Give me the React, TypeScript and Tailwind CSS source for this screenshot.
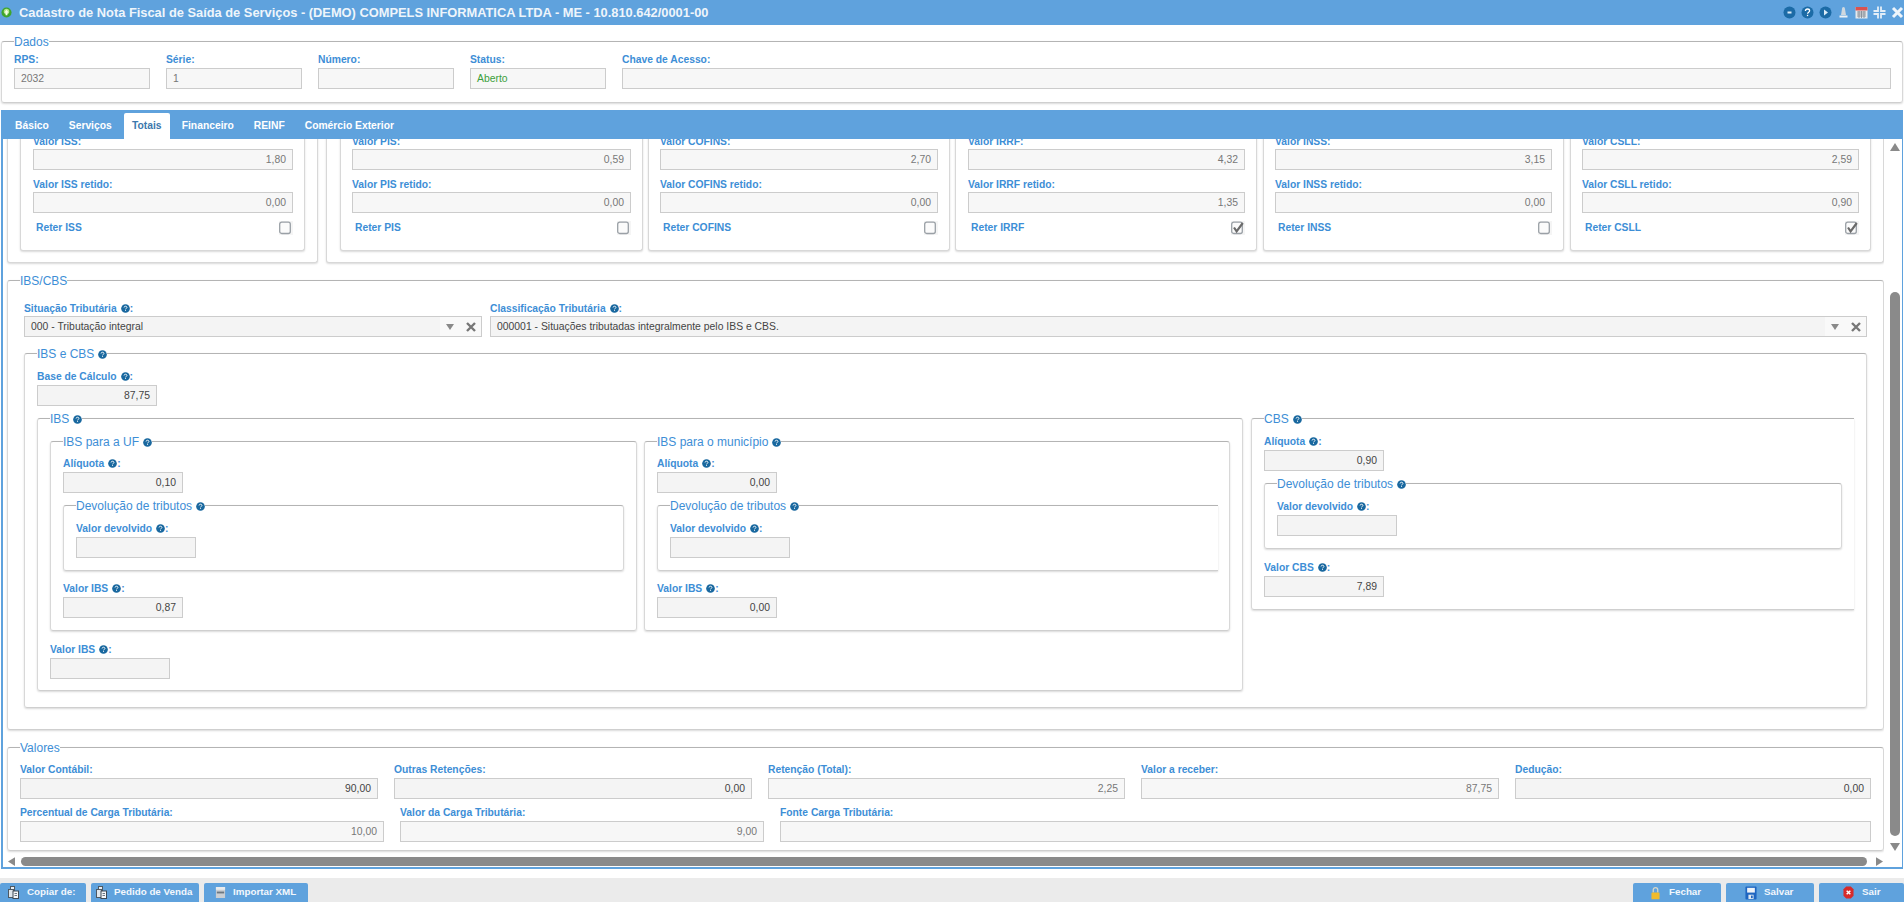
import React from 'react';

const labelBase = "block h-[14px] text-[10.3px] text-[#3d8ed6] font-bold whitespace-nowrap";
const labelCls = `${labelBase} leading-[14px]`;

function Help() {
  return (
    <svg viewBox="0 0 10 10" className="inline-block w-[9px] h-[9px] align-[-1px] ml-[4px]">
      <circle cx="5" cy="5" r="4.8" fill="#19689f" />
      <path d="M3.400 3.900C3.500 2.900 4.200 2.500 5 2.500c.9 0 1.600.5 1.600 1.300 0 1.100-1.500 1-1.500 2.200" fill="none" stroke="#fff" strokeWidth="1" />
      <rect x="4.600" y="6.700" width="1" height="1" fill="#fff" />
    </svg>
  );
}

function Box({ value, cls, soft, green, left }: { value?: string; cls?: string; soft?: boolean; green?: boolean; left?: boolean }) {
  const bg = soft ? "bg-[#f7f7f7]" : "bg-[#f4f4f4]";
  const color = green ? "text-[#3c9f3c]" : soft ? "text-[#777777]" : "text-[#444444]";
  return (
    <div className={`h-[21px] border border-[#cccccc] px-[6px] text-[10.4px] leading-[20px] whitespace-nowrap ${left ? "text-left" : "text-right"} ${bg} ${color} ${cls ?? ""}`}>
      {value}
    </div>
  );
}

function Field({ label, help, value, w, soft, left, green }: { label: string; help?: boolean; value?: string; w: string; soft?: boolean; left?: boolean; green?: boolean }) {
  return (
    <div className={w}>
      <label className={`${labelBase} leading-[12px]`}>
        {label}
        {help && <Help />}:
      </label>
      <Box value={value} soft={soft} green={green} left={left} />
    </div>
  );
}

function Group({ title, help, cls, children }: { title: string; help?: boolean; cls?: string; children?: React.ReactNode }) {
  return (
    <fieldset className={`border border-[#d8d8d8] border-t-[#b4b4b4] border-b-[#cfcfcf] rounded-[3px] shadow-[0_1px_2px_rgba(0,0,0,0.15)] bg-white ${cls ?? ""}`}>
      <legend className="h-[14px] leading-[16px] text-[12px] text-[#3d8ed6] whitespace-nowrap">
        {title}
        {help && <Help />}
      </legend>
      {children}
    </fieldset>
  );
}

function Panel({ cls, children }: { cls?: string; children?: React.ReactNode }) {
  return (
    <div className={`border border-[#d8d8d8] border-t-0 rounded-b-[3px] shadow-[0_1px_2px_rgba(0,0,0,0.15)] bg-white ${cls ?? ""}`}>
      {children}
    </div>
  );
}

function Check({ checked }: { checked?: boolean }) {
  return (
    <span className="flex w-[14px] h-[14px] bg-[#f5f5f5]">
      <svg viewBox="0 0 14 14" className="w-[14px] h-[14px]">
        <rect x="0.700" y="1.200" width="10.600" height="11.300" rx="2" fill="#fbfbfb" stroke="#9aa0a6" strokeWidth="1.300" />
        {checked && <path d="M3 6.500l2.600 3.800L11.800 2" fill="none" stroke="#6a6a6a" strokeWidth="2.200" />}
      </svg>
    </span>
  );
}

function TaxCard({ name, value, retido, checked, input, cardCls }: { name: string; value: string; retido: string; checked?: boolean; input: string; cardCls: string }) {
  return (
    <Panel cls={`shrink-0 h-[117px] pt-[1px] ${cardCls}`}>
      <div className={input}>
        <label className={labelCls}>Valor {name}:</label>
        <Box value={value} soft />
        <label className={`${labelCls} mt-[8px]`}>Valor {name} retido:</label>
        <Box value={retido} soft />
        <div className="flex items-center justify-between h-[14px] mt-[8px] pl-[3px]">
          <span className={labelCls}>Reter {name}</span>
          <Check checked={checked} />
        </div>
      </div>
    </Panel>
  );
}

function SelectBox({ text }: { text: string }) {
  return (
    <div className="flex h-[21px] border border-[#cccccc] bg-[#f4f4f4] w-full">
      <span className="flex-1 px-[6px] text-[10.4px] leading-[20px] text-[#444444]">{text}</span>
      <span className="flex w-[41px] items-center justify-end gap-[12px] bg-[#f9f9f9] pr-[5px]">
        <svg viewBox="0 0 8 6" className="w-[8px] h-[6px]"><path d="M0 0h8L4 6z" fill="#8a8a8a" /></svg>
        <svg viewBox="0 0 10 10" className="w-[10px] h-[10px]"><path d="M1 1l8 8M9 1l-8 8" stroke="#777777" strokeWidth="2.400" /></svg>
      </span>
    </div>
  );
}

function Devolucao({ cls }: { cls: string }) {
  return (
    <Group title="Devolução de tributos" help cls={`h-[73px] px-[12px] ${cls}`}>
      <div className="pt-[11px]">
        <Field label="Valor devolvido" help w="w-[120px]" />
      </div>
    </Group>
  );
}

function IbsSide({ title, cls, aliq, valor, open }: { title: string; cls: string; aliq: string; valor: string; open?: boolean }) {
  return (
    <Group title={title} help cls={`h-[197px] px-[12px] shrink-0 ${cls}`}>
      <div className="pt-[10px]">
        <Field label="Alíquota" help value={aliq} w="w-[120px]" />
        <Devolucao cls={`mt-[5px] ${open ? "border-r-0 rounded-r-none -mr-[1px]" : ""}`} />
        <div className="mt-[12px]">
          <Field label="Valor IBS" help value={valor} w="w-[120px]" />
        </div>
      </div>
    </Group>
  );
}

function TabLabel({ children, cls }: { children: string; cls?: string }) {
  return (
    <span className={`h-[26px] leading-[26px] text-[10.3px] font-bold text-white whitespace-nowrap ${cls ?? ""}`}>
      {children}
    </span>
  );
}

function DocIcon() {
  return (
    <svg viewBox="0 0 11 13" className="w-[11px] h-[13px] shrink-0">
      <rect x="2.500" y="0.500" width="4" height="4" fill="#e8eef4" stroke="#4d5963" />
      <rect x="0.500" y="3.500" width="5" height="8" fill="#dfe6ec" stroke="#4d5963" />
      <rect x="5" y="5" width="5.500" height="7.500" fill="#f5f7f9" stroke="#3f4a54" />
      <path d="M6.500 7.500h2.500M6.500 9.500h2.500" stroke="#6a7680" />
    </svg>
  );
}

function FootBtn({ cls, icon, text }: { cls: string; icon: React.ReactNode; text: string }) {
  return (
    <div className={`flex items-center h-[19px] bg-[#5fa2dd] rounded-t-[2px] text-[#f2f7fc] text-[9.8px] font-bold whitespace-nowrap ${cls}`}>
      {icon}
      <span>{text}</span>
    </div>
  );
}

export default function App() {
  return (
    <div className="w-[1904px] h-[902px] overflow-hidden bg-white flex flex-col font-['Liberation_Sans',Arial,sans-serif]">
      <header className="h-[25px] shrink-0 bg-[#5fa2dd] flex items-center pl-[1px] text-white">
        <svg viewBox="0 0 12 12" className="w-[11px] h-[11px] shrink-0">
          <circle cx="6" cy="6" r="5.500" fill="#3fa52c" />
          <circle cx="6" cy="5" r="3" fill="#b4e58c" />
          <path d="M6 3l2.200 3H7v3H5V6H3.800z" fill="#f4ffe8" />
        </svg>
        <h1 className="ml-[7px] text-[12.85px] font-bold leading-[25px] text-[#eef5fb] whitespace-nowrap">Cadastro de Nota Fiscal de Saída de Serviços - (DEMO) COMPELS INFORMATICA LTDA - ME - 10.810.642/0001-00</h1>
        <div className="ml-auto flex items-center gap-[5px]">
          <svg viewBox="0 0 13 13" className="w-[13px] h-[13px]"><circle cx="6.500" cy="6.500" r="6" fill="#1c6ba6" /><rect x="4.500" y="5.500" width="4" height="2" fill="#dcecf8" /></svg>
          <svg viewBox="0 0 13 13" className="w-[13px] h-[13px]"><circle cx="6.500" cy="6.500" r="6" fill="#1c6ba6" /><path d="M4.400 5C4.500 3.600 5.500 3 6.500 3c1.200 0 2.100.7 2.100 1.800 0 1.500-2 1.300-2 3" fill="none" stroke="#fff" strokeWidth="1.300" /><rect x="5.900" y="8.800" width="1.300" height="1.300" fill="#fff" /></svg>
          <svg viewBox="0 0 13 13" className="w-[13px] h-[13px]"><circle cx="6.500" cy="6.500" r="6" fill="#1c6ba6" /><path d="M5 3.500l4 3-4 3z" fill="#dcecf8" /></svg>
          <svg viewBox="0 0 13 13" className="w-[13px] h-[13px]"><path d="M6.500 1c1 0 1.400.7 1.500 2l1 6H4l1-6c.1-1.300.5-2 1.500-2z" fill="#cfd8df" /><rect x="2.500" y="9.500" width="8" height="2" fill="#eef2f5" /></svg>
          <svg viewBox="0 0 13 13" className="w-[13px] h-[13px]"><rect x="0.500" y="1" width="12" height="11.500" fill="#e6e9ec" /><rect x="0.500" y="1" width="12" height="3.500" fill="#d9534f" /><path d="M2 6h9M2 8h9M2 10h9M4 5v7M6.500 5v7M9 5v7" stroke="#7d8791" strokeWidth="0.800" /></svg>
          <svg viewBox="0 0 13 13" className="w-[13px] h-[13px]"><path d="M5 0.500V5H0.500M8 0.500V5h4.500M5 12.500V8H0.500M8 12.500V8h4.500" fill="none" stroke="#e4eef7" strokeWidth="1.800" /></svg>
          <svg viewBox="0 0 13 13" className="w-[13px] h-[13px]"><path d="M2 2l9 9M11 2l-9 9" stroke="#eef5fb" strokeWidth="3" /></svg>
        </div>
      </header>

      <div className="h-[9px] shrink-0" />
      <Group title="Dados" cls="h-[69px] mx-[1px] shrink-0 pl-[12px] pr-[11px]">
        <div className="flex gap-[16px] pt-[6px]">
          <Field label="RPS" value="2032" w="w-[136px]" soft left />
          <Field label="Série" value="1" w="w-[136px]" soft left />
          <Field label="Número" w="w-[136px]" soft left />
          <Field label="Status" value="Aberto" w="w-[136px]" soft left green />
          <Field label="Chave de Acesso" w="flex-1" soft left />
        </div>
      </Group>

      <div className="mt-[7px] mx-[1px] h-[29px] shrink-0 bg-[#5fa2dd] flex items-end pl-[14px]">
        <TabLabel>Básico</TabLabel>
        <TabLabel cls="ml-[20px]">Serviços</TabLabel>
        <TabLabel cls="ml-[12px] w-[46px] text-center bg-white !text-[#3c78ad] rounded-t-[2px]">Totais</TabLabel>
        <TabLabel cls="ml-[12px]">Financeiro</TabLabel>
        <TabLabel cls="ml-[20px]">REINF</TabLabel>
        <TabLabel cls="ml-[20px]">Comércio Exterior</TabLabel>
      </div>

      <div className="mx-[1px] h-[730px] shrink-0 border-l-[2px] border-r border-b-[2px] border-[#5fa2dd] flex flex-col overflow-hidden">
        <div className="flex h-[717px] shrink-0">
          <div className="w-[1881px] shrink-0 overflow-hidden pl-[4px]">
            <div className="w-[1877px] -mt-[5px]">
              <div className="flex h-[129px] gap-[8px]">
                <Panel cls="w-[311px] shrink-0 h-[129px] pl-[12px]">
                  <TaxCard name="ISS" value="1,80" retido="0,00" input="w-[260px] ml-[12px]" cardCls="w-[285px]" />
                </Panel>
                <Panel cls="flex-1 h-[129px] pl-[13px] flex gap-[5px]">
                  <TaxCard name="PIS" value="0,59" retido="0,00" input="w-[279px] ml-[11px]" cardCls="w-[303px]" />
                  <TaxCard name="COFINS" value="2,70" retido="0,00" input="w-[278px] ml-[11px]" cardCls="w-[302px]" />
                  <TaxCard name="IRRF" value="4,32" retido="1,35" checked input="w-[277px] ml-[12px]" cardCls="w-[302px]" />
                  <TaxCard name="INSS" value="3,15" retido="0,00" input="w-[277px] ml-[11px]" cardCls="w-[301px] ml-[1px]" />
                  <TaxCard name="CSLL" value="2,59" retido="0,90" checked input="w-[277px] ml-[11px]" cardCls="w-[301px] ml-[1px]" />
                </Panel>
              </div>

              <Group title="IBS/CBS" cls="h-[457px] mt-[10px] px-[12px]">
                <div className="px-[4px]">
                  <div className="flex gap-[8px] pt-[15px]">
                    <div className="w-[458px]">
                      <label className={labelCls}>Situação Tributária<Help />:</label>
                      <SelectBox text="000 - Tributação integral" />
                    </div>
                    <div className="flex-1">
                      <label className={labelCls}>Classificação Tributária<Help />:</label>
                      <SelectBox text="000001 - Situações tributadas integralmente pelo IBS e CBS." />
                    </div>
                  </div>
                  <Group title="IBS e CBS" help cls="h-[362px] mt-[9px] px-[12px]">
                    <div className="pt-[11px]">
                      <Field label="Base de Cálculo" help value="87,75" w="w-[120px]" />
                    </div>
                    <div className="flex items-start gap-[8px] mt-[5px]">
                      <Group title="IBS" help cls="w-[1206px] h-[280px] shrink-0 px-[12px]">
                        <div className="flex gap-[7px] pt-[9px]">
                          <IbsSide title="IBS para a UF" cls="w-[587px]" aliq="0,10" valor="0,87" />
                          <IbsSide title="IBS para o município" cls="w-[586px]" aliq="0,00" valor="0,00" open />
                        </div>
                        <div className="mt-[13px]">
                          <Field label="Valor IBS" help w="w-[120px]" />
                        </div>
                      </Group>
                      <Group title="CBS" help cls="flex-1 h-[199px] px-[12px] border-r-0 rounded-r-none">
                        <div className="pt-[11px]">
                          <Field label="Alíquota" help value="0,90" w="w-[120px]" />
                          <Devolucao cls="mt-[5px]" />
                          <div className="mt-[13px]">
                            <Field label="Valor CBS" help value="7,89" w="w-[120px]" />
                          </div>
                        </div>
                      </Group>
                    </div>
                  </Group>
                </div>
              </Group>

              <Group title="Valores" cls="h-[111px] mt-[10px] px-[12px]">
                <div className="flex gap-[16px] pt-[10px]">
                  <Field label="Valor Contábil" value="90,00" w="w-[358px]" />
                  <Field label="Outras Retenções" value="0,00" w="w-[358px]" />
                  <Field label="Retenção (Total)" value="2,25" w="w-[357px]" soft />
                  <Field label="Valor a receber" value="87,75" w="w-[358px]" soft />
                  <Field label="Dedução" value="0,00" w="flex-1" />
                </div>
                <div className="flex gap-[16px] pt-[8px]">
                  <Field label="Percentual de Carga Tributária" value="10,00" w="w-[364px]" soft />
                  <Field label="Valor da Carga Tributária" value="9,00" w="w-[364px]" soft />
                  <Field label="Fonte Carga Tributária" w="flex-1" soft />
                </div>
              </Group>
            </div>
          </div>
          <div className="w-[10px] ml-[6px] shrink-0 flex flex-col items-center">
            <svg viewBox="0 0 10 8" className="w-[10px] h-[8px] mt-[4px]"><path d="M5 0l5 8H0z" fill="#8a8a8a" /></svg>
            <div className="w-[10px] h-[544px] mt-[141px] rounded-[5px] bg-[#8a8a8a]" />
            <svg viewBox="0 0 10 8" className="w-[10px] h-[8px] mt-[7px]"><path d="M0 0h10L5 8z" fill="#8a8a8a" /></svg>
          </div>
        </div>
        <div className="h-[9px] mt-[1px] flex items-center pl-[5px]">
          <svg viewBox="0 0 8 10" className="w-[7px] h-[9px]"><path d="M8 0v10L0 5z" fill="#8a8a8a" /></svg>
          <div className="ml-[6px] h-[9px] w-[1846px] rounded-[5px] bg-[#8a8a8a]" />
          <svg viewBox="0 0 8 10" className="ml-[9px] w-[7px] h-[9px]"><path d="M0 0v10l8-5z" fill="#8a8a8a" /></svg>
        </div>
      </div>

      <footer className="h-[24px] mt-[9px] shrink-0 bg-[#ebebeb] flex items-end">
        <FootBtn cls="w-[86px] pl-[8px] gap-[8px]" icon={<DocIcon />} text="Copiar de:" />
        <FootBtn cls="w-[108px] ml-[5px] pl-[5px] gap-[7px]" icon={<DocIcon />} text="Pedido de Venda" />
        <FootBtn cls="w-[104px] ml-[5px] pl-[11px] gap-[7px]" icon={
          <svg viewBox="0 0 12 14" className="w-[11px] h-[13px] shrink-0"><rect x="1" y="1" width="10" height="12" fill="#c9ced3" /><rect x="1" y="1" width="10" height="3" fill="#e8ebee" /><rect x="2" y="6" width="8" height="2" fill="#6d7780" /></svg>
        } text="Importar XML" />
        <div className="flex-1" />
        <FootBtn cls="w-[88px] pl-[18px] gap-[9px]" icon={
          <svg viewBox="0 0 10 15" className="w-[9px] h-[14px] shrink-0"><path d="M2.500 7V4a2.500 2.500 0 015 0V7" fill="none" stroke="#d8d8c8" strokeWidth="1.400" /><rect x="0.500" y="7" width="9" height="7.500" rx="1" fill="#f0bb2c" /></svg>
        } text="Fechar" />
        <FootBtn cls="w-[88px] ml-[5px] pl-[19px] gap-[7px]" icon={
          <svg viewBox="0 0 14 16" className="w-[12px] h-[14px] shrink-0"><rect x="0.500" y="0.500" width="13" height="15" rx="1" fill="#1f66c1" /><rect x="2.500" y="2" width="9" height="5.500" fill="#eef3f8" /><rect x="4" y="10" width="6" height="5" fill="#dfe8f0" /><rect x="7" y="11" width="2" height="3" fill="#1f66c1" /></svg>
        } text="Salvar" />
        <FootBtn cls="w-[85px] ml-[5px] pl-[24px] gap-[8px]" icon={
          <svg viewBox="0 0 12 14" className="w-[11px] h-[13px] shrink-0"><path d="M3.500 0.500h5l3 3v7l-3 3h-5l-3-3v-7z" fill="#d62b2b" /><path d="M4 5l4 4M8 5l-4 4" stroke="#fff" strokeWidth="1.600" /></svg>
        } text="Sair" />
      </footer>
    </div>
  );
}
